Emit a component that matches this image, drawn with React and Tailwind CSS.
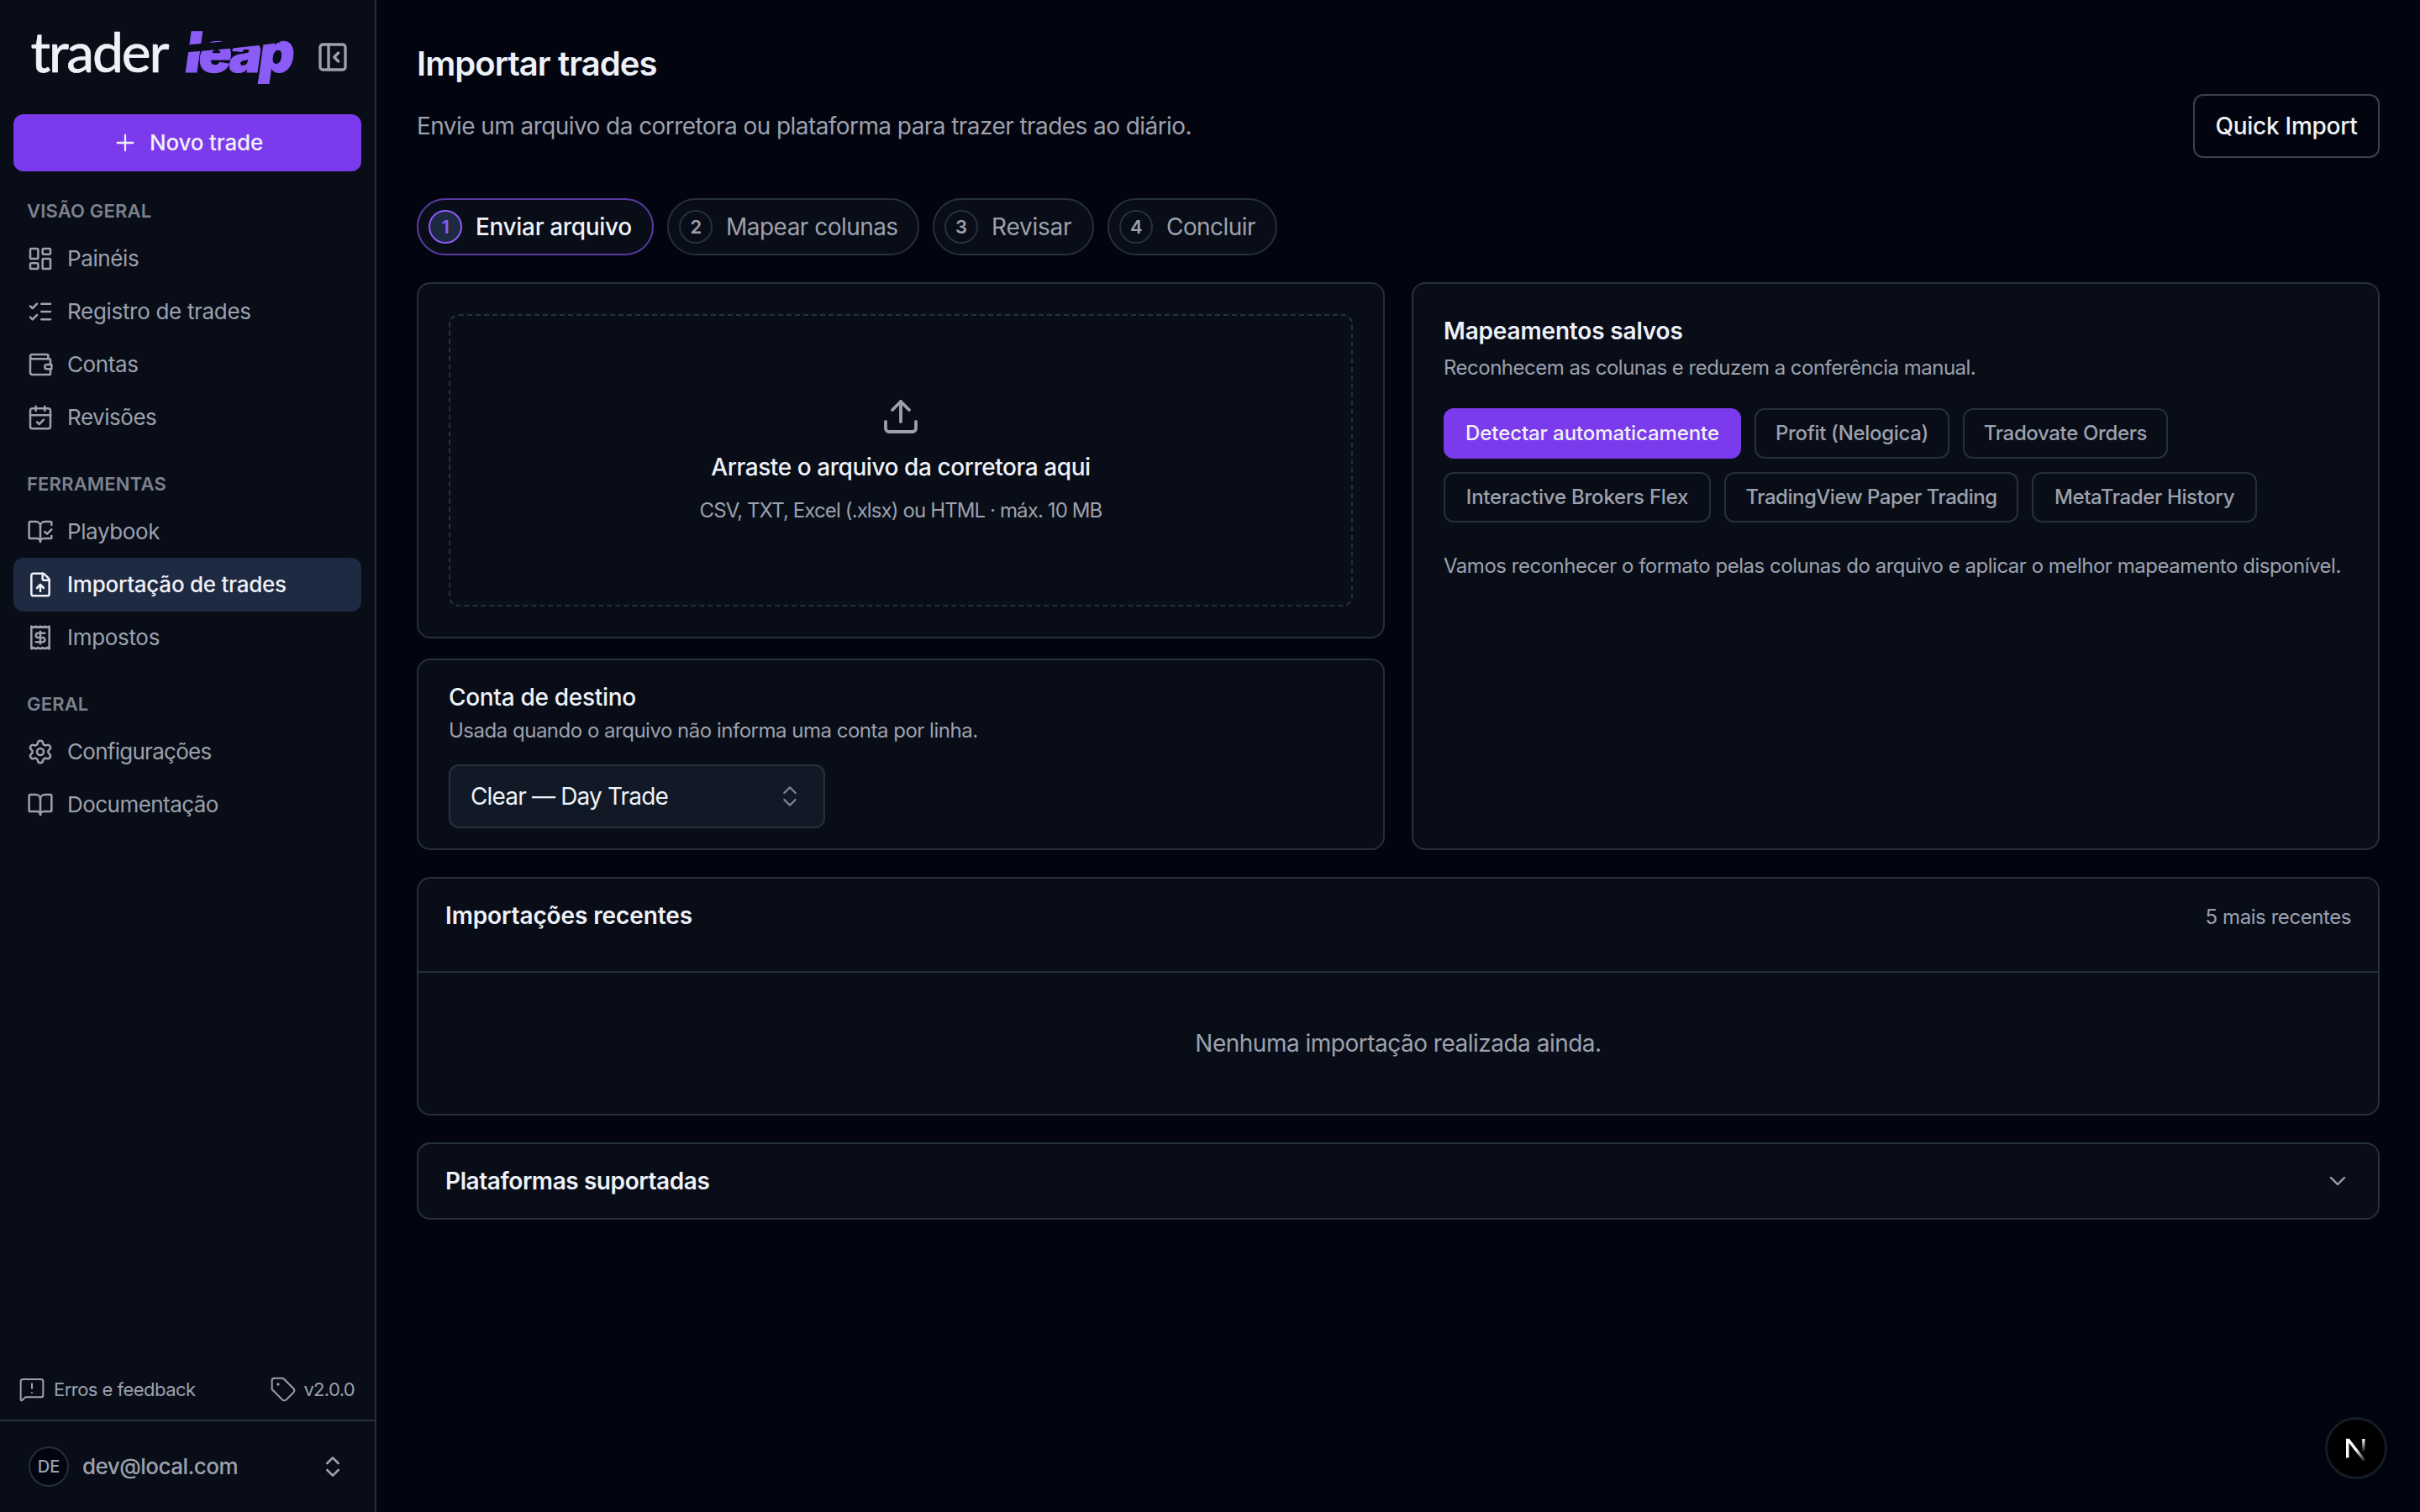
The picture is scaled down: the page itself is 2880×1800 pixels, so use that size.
import {
  BookOpen,
  BookOpenCheck,
  CalendarCheck,
  ChevronDown,
  ChevronsUpDown,
  FileUp,
  LayoutDashboard,
  ListChecks,
  MessageSquareWarning,
  PanelLeftClose,
  Plus,
  Settings,
  Tag,
  Upload,
} from "lucide-react";

const WalletIcon = ({ size = 32, strokeWidth = 2 }) => (
  <svg width={size} height={size} viewBox="0 0 24 24" fill="none" stroke="currentColor" strokeWidth={strokeWidth} strokeLinecap="round" strokeLinejoin="round">
    <path d="M19 7V4a1 1 0 0 0-1-1H5a2 2 0 0 0 0 4h15a1 1 0 0 1 1 1v4M3 5v14a2 2 0 0 0 2 2h15a1 1 0 0 0 1-1v-4" />
    <path d="M22 12h-4a2 2 0 0 0 0 4h4z" />
  </svg>
);

const ReceiptIcon = ({ size = 32, strokeWidth = 2 }) => (
  <svg width={size} height={size} viewBox="0 0 24 24" fill="none" stroke="currentColor" strokeWidth={strokeWidth} strokeLinecap="round" strokeLinejoin="round">
    <path d="M4 2v20l2-1 2 1 2-1 2 1 2-1 2 1 2-1 2 1V2l-2 1-2-1-2 1-2-1-2 1-2-1-2 1Z" />
    <path d="M16 8h-6a2 2 0 1 0 0 4h4a2 2 0 1 1 0 4H8" />
    <path d="M12 17.5v-11" />
  </svg>
);

const sections = [
  {
    title: "VISÃO GERAL",
    items: [
      { label: "Painéis", icon: LayoutDashboard, tracking: "tracking-[-0.015em]" },
      { label: "Registro de trades", icon: ListChecks, tracking: "tracking-[-0.012em]" },
      { label: "Contas", icon: WalletIcon, tracking: "tracking-[-0.015em]" },
      { label: "Revisões", icon: CalendarCheck, tracking: "tracking-[-0.018em]" },
    ],
  },
  {
    title: "FERRAMENTAS",
    items: [
      { label: "Playbook", icon: BookOpenCheck, tracking: "tracking-[-0.015em]" },
      { label: "Importação de trades", icon: FileUp, active: true, tracking: "tracking-[-0.01em]" },
      { label: "Impostos", icon: ReceiptIcon, tracking: "tracking-[-0.012em]" },
    ],
  },
  {
    title: "GERAL",
    items: [
      { label: "Configurações", icon: Settings, tracking: "tracking-[-0.028em]" },
      { label: "Documentação", icon: BookOpen, tracking: "tracking-[-0.021em]" },
    ],
  },
];

const steps = [
  { label: "Enviar arquivo", width: "w-[282px]", active: true, tracking: "tracking-[-0.012em]" },
  { label: "Mapear colunas", width: "w-[300px]", tracking: "tracking-[-0.019em]" },
  { label: "Revisar", width: "w-[192px]", tracking: "tracking-[-0.008em]" },
  { label: "Concluir", width: "w-[202px]", tracking: "tracking-[-0.02em]" },
];

const mappings = [
  { label: "Detectar automaticamente", width: "w-[354px]", active: true, tracking: "tracking-[-0.004em]" },
  { label: "Profit (Nelogica)", width: "w-[232px]", tracking: "tracking-[-0.014em]" },
  { label: "Tradovate Orders", width: "w-[244px]", tracking: "tracking-[-0.015em]" },
  { label: "Interactive Brokers Flex", width: "w-[318px]", tracking: "tracking-[-0.009em]" },
  { label: "TradingView Paper Trading", width: "w-[350px]", tracking: "tracking-[-0.02em]" },
  { label: "MetaTrader History", width: "w-[268px]", tracking: "tracking-[-0.015em]" },
];

const Card = ({ className = "", children }) => (
  <section className={`rounded-[16px] border-2 border-[#262f3e] bg-[#090d18] ${className}`}>{children}</section>
);

const Logo = () => (
  <svg width="376" height="136" viewBox="0 0 376 136">
    <text x="36.5" y="85.6" fontFamily="Lato" fontSize="66" textLength="165" fill="#eef1f7" stroke="#eef1f7" strokeWidth="0.7">
      trader
    </text>
    <text
      transform="translate(218 85.5) skewX(-8) scale(1 1.02)"
      fontFamily="Inter"
      fontSize="65"
      fontWeight="900"
      textLength="130"
      fill="#8b5cf6"
      stroke="#8b5cf6"
      strokeWidth="1"
    >
      leap
    </text>
    {/* swoosh cut through the top of the letters */}
    <path d="M214 54.2 243 51.4 264 49.8 266 44 318 44 334 50.6 310 53.8 278 57.2 214 63Z" fill="#090d18" />
  </svg>
);

const NavItem = ({ label, icon: Icon, active, tracking }) => (
  <a
    className={`-mb-px flex h-16 items-center gap-4 rounded-[12px] px-4 text-[26px] ${tracking} ${
      active ? "bg-[#1e2942] font-medium text-[#eef1f7]" : "text-[#9ca1ad]"
    }`}
  >
    <Icon size={32} strokeWidth={1.9} />
    <span className="-mt-0.5">{label}</span>
  </a>
);

const Sidebar = () => (
  <aside className="flex w-[448px] shrink-0 flex-col border-r-2 border-[#262f3e] bg-[#090d18] text-[#9ca1ad]">
    <header className="flex h-[136px] shrink-0 items-center">
      <Logo />
      <PanelLeftClose size={40} className="shrink-0" />
    </header>
    <div className="px-4">
      <button className="flex h-[68px] w-full items-center justify-center gap-3 rounded-[12px] bg-[#7c3aed] text-[26px] font-medium tracking-[-0.007em] text-[#eef1f7]">
        <Plus size={32} strokeWidth={1.7} />
        <span className="-mt-0.5 pl-px">Novo trade</span>
      </button>
    </div>
    <nav className="flex grow flex-col gap-6 px-4 pt-[23px]">
      {sections.map((s) => (
        <div key={s.title}>
          <h2 className="h-[49px] px-4 text-[22px] leading-[49px] font-semibold tracking-[0.008em] text-[#7d828e]">{s.title}</h2>
          {s.items.map((item) => (
            <NavItem key={item.label} {...item} />
          ))}
        </div>
      ))}
    </nav>
    <div className="flex h-[72px] items-center justify-between pr-6 pl-[22px] text-[22px]">
      <span className="flex items-center gap-2.5 tracking-[-0.024em]">
        <MessageSquareWarning size={32} strokeWidth={1.5} />
        Erros e feedback
      </span>
      <span className="flex items-center gap-2 tracking-[-0.03em]">
        <Tag size={32} strokeWidth={1.5} />
        v2.0.0
      </span>
    </div>
    <div className="flex h-[110px] items-center border-t-2 border-[#262f3e] px-[34px]">
      <span className="flex size-12 items-center justify-center rounded-full border-2 border-[#262f3e] bg-[#020510] text-[20px] font-medium">DE</span>
      <span className="-mt-0.5 ml-4 grow text-[26px] font-medium tracking-[-0.02em]">dev@local.com</span>
      <ChevronsUpDown size={32} />
    </div>
  </aside>
);

const Steps = () => (
  <ol className="mt-12 flex gap-4">
    {steps.map((s, i) => (
      <li
        key={s.label}
        className={`flex h-[68px] items-center gap-4 rounded-full border-2 bg-[#090d18] pl-3 text-[28px] whitespace-nowrap ${s.width} ${s.tracking} ${
          s.active ? "border-[#593a9e] font-medium text-[#eef1f7]" : "border-[#262f3e] text-[#9ca1ad]"
        }`}
      >
        <span
          className={`flex size-10 items-center justify-center rounded-full border-2 text-[22px] font-semibold ${
            s.active ? "border-[#8b5cf6] bg-[#1e2942] text-[#8b5cf6]" : "border-[#262f3e] text-[#9ca1ad]"
          }`}
        >
          {i + 1}
        </span>
        {s.label}
      </li>
    ))}
  </ol>
);

const NextBadge = () => (
  <div className="fixed right-[39px] bottom-[39px] flex size-[74px] items-center justify-center rounded-full border-[3px] border-[#141c28] bg-black shadow-lg">
    <svg width="40" height="40" viewBox="0 0 40 40" fill="none" strokeWidth="3.4">
      <defs>
        <linearGradient id="diag" x1="20" y1="22" x2="30" y2="35" gradientUnits="userSpaceOnUse">
          <stop stopColor="#fff" />
          <stop offset="1" stopColor="#fff" stopOpacity="0.1" />
        </linearGradient>
        <linearGradient id="stem" x1="28.8" y1="9" x2="28.8" y2="25" gradientUnits="userSpaceOnUse">
          <stop stopColor="#fff" />
          <stop offset="1" stopColor="#fff" stopOpacity="0" />
        </linearGradient>
      </defs>
      <path d="M9.7 31.5V10.5H11L30 35" stroke="url(#diag)" />
      <path d="M28.8 9v16" stroke="url(#stem)" />
    </svg>
  </div>
);

export default function App() {
  return (
    <div className="flex h-[1800px] w-[2880px] overflow-hidden bg-[#020510] font-[Inter,sans-serif] text-[#9ca1ad]">
      <Sidebar />
      <main className="grow px-12 pt-[52px]">
        <h1 className="text-[40px] leading-[48px] font-semibold tracking-[-0.023em] text-[#eef1f7]">Importar trades</h1>
        <div className="mt-3 flex items-center justify-between">
          <p className="text-[28px] tracking-[-0.0203em]">Envie um arquivo da corretora ou plataforma para trazer trades ao diário.</p>
          <button className="h-[76px] w-[222px] rounded-[12px] border-2 border-[#3b404f] text-[28px] font-medium tracking-[-0.009em] text-[#eef1f7]">
            Quick Import
          </button>
        </div>

        <Steps />

        <div className="mt-8 grid grid-cols-2 gap-8">
          <div className="flex flex-col gap-6">
            <Card className="h-[424px] p-9">
              <div className="flex h-full flex-col items-center justify-center rounded-[12px] border-2 border-dashed border-[#262f3e] pt-0.5">
                <Upload size={48} strokeWidth={1.9} />
                <p className="mt-4 text-[28px] leading-10 font-medium tracking-[-0.0155em] text-[#eef1f7]">Arraste o arquivo da corretora aqui</p>
                <p className="mt-3.5 text-[24px] leading-9 tracking-[-0.037em]">CSV, TXT, Excel (.xlsx) ou HTML · máx. 10 MB</p>
              </div>
            </Card>
            <Card className="h-[228px] px-9 py-6">
              <h2 className="text-[28px] leading-10 font-medium tracking-[-0.011em] text-[#eef1f7]">Conta de destino</h2>
              <p className="mt-0.5 text-[24px] leading-9 tracking-[-0.0205em]">Usada quando o arquivo não informa uma conta por linha.</p>
              <button className="mt-[22px] flex h-[76px] w-[448px] items-center justify-between rounded-[12px] border-2 border-[#262f3e] bg-[#111926] px-6 text-[28px] tracking-[-0.03em] text-[#eef1f7]">
                Clear — Day Trade
                <ChevronsUpDown size={32} strokeWidth={1.7} className="text-[#7d828e]" />
              </button>
            </Card>
          </div>
          <Card className="p-9">
            <h2 className="text-[28px] leading-10 font-semibold tracking-[-0.006em] text-[#eef1f7]">Mapeamentos salvos</h2>
            <p className="mt-1.5 text-[24px] leading-9 tracking-[-0.0213em]">Reconhecem as colunas e reduzem a conferência manual.</p>
            <div className="mt-[30px] flex flex-wrap gap-4">
              {mappings.map((m) => (
                <button
                  key={m.label}
                  className={`h-[60px] rounded-[12px] border-2 text-[24px] font-medium whitespace-nowrap ${m.width} ${m.tracking} ${
                    m.active ? "border-[#7c3aed] bg-[#7c3aed] text-[#eef1f7]" : "border-[#262f3e]"
                  }`}
                >
                  {m.label}
                </button>
              ))}
            </div>
            <p className="mt-[34px] text-[24px] leading-9 tracking-[-0.0202em] whitespace-nowrap">
              Vamos reconhecer o formato pelas colunas do arquivo e aplicar o melhor mapeamento disponível.
            </p>
          </Card>
        </div>

        <Card className="mt-8">
          <div className="flex h-28 items-start justify-between border-b-2 border-[#262f3e] px-8 pt-6">
            <h2 className="text-[28px] leading-10 font-semibold tracking-[-0.004em] text-[#eef1f7]">Importações recentes</h2>
            <span className="text-[24px] leading-[44px] tracking-[-0.018em]">5 mais recentes</span>
          </div>
          <p className="flex h-[168px] items-center justify-center text-[28px] tracking-[-0.018em]">Nenhuma importação realizada ainda.</p>
        </Card>

        <Card className="mt-8 flex h-[92px] items-center justify-between px-8">
          <h2 className="text-[28px] font-semibold tracking-[-0.015em] text-[#eef1f7]">Plataformas suportadas</h2>
          <ChevronDown size={32} strokeWidth={1.8} />
        </Card>
      </main>
      <NextBadge />
    </div>
  );
}
